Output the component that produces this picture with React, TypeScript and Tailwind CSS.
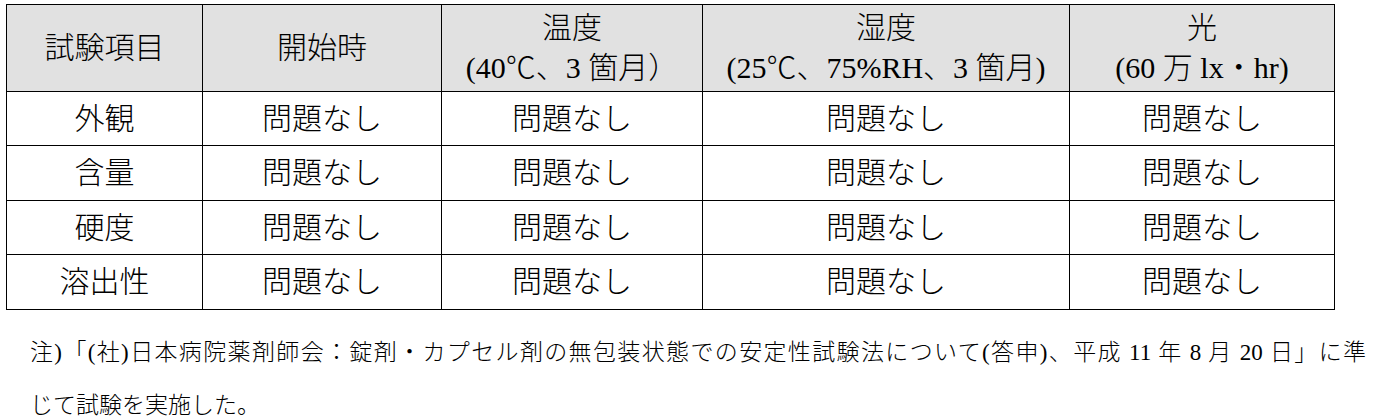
import React from "react";

const font = { fontFamily: '"Liberation Serif", "Noto Sans CJK JP", serif' };

const rows = ["外観", "含量", "硬度", "溶出性"];

export default function App() {
  return (
    <div className="w-[1374px] h-[420px] bg-white text-black overflow-hidden" style={font}>
      <div className="pt-[4px] pl-[6px]">
        <table className="border-collapse table-fixed w-[1328px] text-[30px] leading-[40px] font-light">
          <colgroup>
            <col className="w-[196px]" />
            <col className="w-[239px]" />
            <col className="w-[261px]" />
            <col className="w-[367px]" />
            <col className="w-[265px]" />
          </colgroup>
          <thead>
            <tr className="h-[87px] bg-[#e1e1e1]">
              <th className="border border-black font-light text-center">試験項目</th>
              <th className="border border-black font-light text-center">開始時</th>
              <th className="border border-black font-light text-center">
                <div>温度</div>
                <div>(40℃、3 箇月）</div>
              </th>
              <th className="border border-black font-light text-center">
                <div>湿度</div>
                <div>(25℃、75%RH、3 箇月)</div>
              </th>
              <th className="border border-black font-light text-center">
                <div>光</div>
                <div>(60 万 lx・hr)</div>
              </th>
            </tr>
          </thead>
          <tbody>
            {rows.map((r, i) => (
              <tr key={r} className={i % 2 === 0 ? "h-[54px]" : "h-[55px]"}>
                <td className="border border-black text-center">{r}</td>
                <td className="border border-black text-center">問題なし</td>
                <td className="border border-black text-center">問題なし</td>
                <td className="border border-black text-center">問題なし</td>
                <td className="border border-black text-center">問題なし</td>
              </tr>
            ))}
          </tbody>
        </table>
      </div>
      <div className="mt-[16px] pl-[30px] w-[1366px] text-[23px] leading-[53px] font-light">
        <div className="text-justify [text-align-last:justify]">
          注)「(社)日本病院薬剤師会：錠剤・カプセル剤の無包装状態での安定性試験法について(答申)、平成 11 年 8 月 20 日」に準
        </div>
        <div>じて試験を実施した。</div>
      </div>
    </div>
  );
}
